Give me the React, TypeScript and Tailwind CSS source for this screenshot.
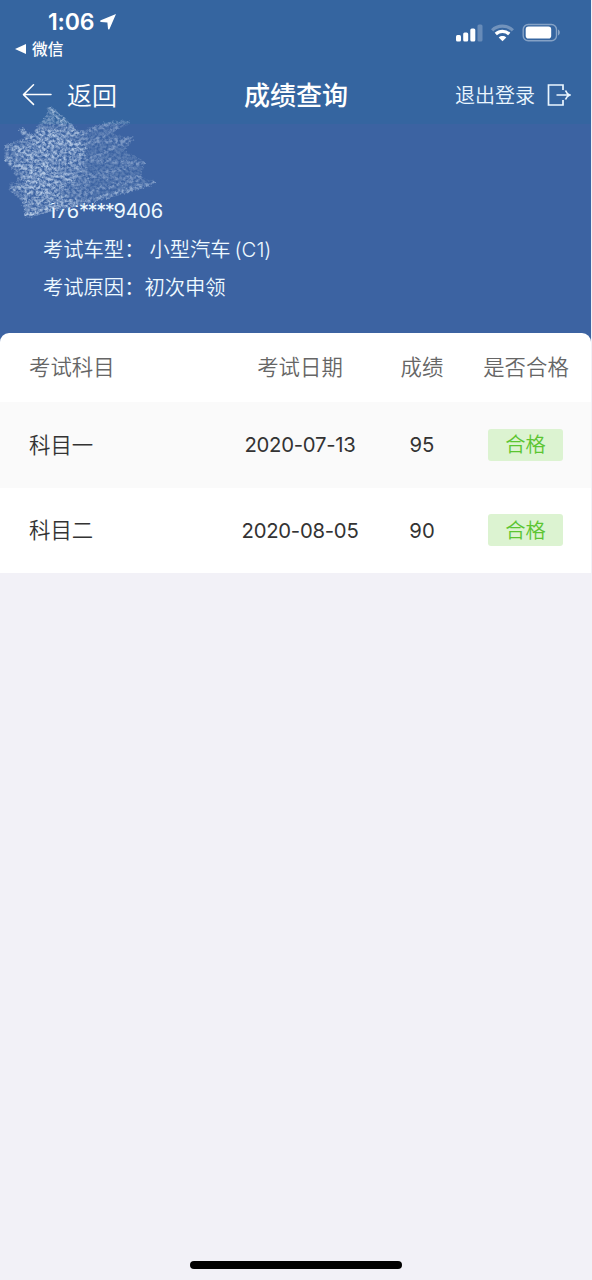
import React from "react";

type Result = { subject: string; date: string; score: number; status: string };

const results: Result[] = [
  { subject: "科目一", date: "2020-07-13", score: 95, status: "合格" },
  { subject: "科目二", date: "2020-08-05", score: 90, status: "合格" },
];

function StatusBar() {
  return (
    <div className="flex h-[66px] justify-between">
      <div className="pl-[15px] pt-[9px]">
        <div className="flex h-[27px] items-center pl-[33px] text-[23px] font-semibold leading-[27px]">
          <span className="w-[47px] tracking-[-0.2px]">1:06</span>
          <svg className="mb-[2px] ml-[5px]" width="17" height="17" viewBox="0 0 17 17" fill="currentColor">
            <path d="M16 1 .8 7.3c-.9.4-.8 1.5.2 1.6l6.4.7.6 6.2c.1 1 1.1 1.1 1.5.2Z" />
          </svg>
        </div>
        <div className="flex h-[27px] items-center gap-[6px] text-[15.7px] font-medium">
          <svg className="mb-px" width="11" height="10" viewBox="0 0 11 10" fill="currentColor">
            <path d="M0 5 11 0v10Z" />
          </svg>
          <span>微信</span>
        </div>
      </div>
      <div className="mt-[23px] flex h-[20px] items-center pr-[30px]">
        <svg width="27" height="18" viewBox="0 0 27 18" fill="currentColor">
          <rect x="0" y="11" width="5" height="6.5" rx="1.5" />
          <rect x="7.2" y="8.5" width="5" height="9" rx="1.5" />
          <rect x="14.3" y="4.5" width="5" height="13" rx="1.5" />
          <rect x="21.5" y="0.5" width="5" height="17" rx="1.5" opacity=".25" />
        </svg>
        <svg className="ml-[8px]" width="23" height="18" viewBox="0 0 24 18" fill="none" stroke="currentColor" strokeWidth="3.4">
          <path d="M1.2 6.2C7 .5 17 .5 22.8 6.2" opacity=".3" />
          <path d="M5 10.1c4-3.8 10-3.8 14 0" />
          <path d="M8.1 13.6c2.2-2 5.6-2 7.8 0L12 17.6Z" fill="currentColor" stroke="none" />
        </svg>
        <svg className="ml-[8px]" width="39" height="20" viewBox="0 0 39 20">
          <rect x="1.2" y="1.5" width="33.3" height="16.2" rx="5" fill="none" stroke="currentColor" strokeWidth="1.4" opacity=".4" />
          <rect x="3.7" y="3.6" width="25.5" height="12" rx="2.8" fill="currentColor" />
          <path d="M36 6.6v6c2.5-1 2.5-5 0-6Z" fill="currentColor" opacity=".4" />
        </svg>
      </div>
    </div>
  );
}

function NavBar() {
  return (
    <div className="grid h-[58px] grid-cols-[1fr_auto_1fr] items-center pl-[22px] pr-[21px]">
      <div className="flex items-center gap-[14px] text-[25px] font-[350]">
        <svg width="31" height="22" viewBox="0 0 31 22" fill="none" stroke="currentColor" strokeWidth="1.5" strokeLinecap="round" strokeLinejoin="round">
          <path d="M29 10.6H2M11.5.8 1.5 10.6l10 9.8" />
        </svg>
        <span className="pt-[3px]">返回</span>
      </div>
      <h1 className="text-[26px] font-medium">成绩查询</h1>
      <div className="-mr-px flex items-center justify-end gap-[12px] pt-px text-[20px] font-[350] text-[#eaf6ff]">
        <span>退出登录</span>
        <svg className="mb-[2px]" width="24" height="22" viewBox="0 0 24 22" fill="none" stroke="currentColor" strokeWidth="1.7">
          <path d="M16 6V1H1.5v20H16v-5M9.5 11H22.5M18.5 6.5c.8 2.2 2 3.6 4.2 4.5-2.2.9-3.4 2.3-4.2 4.5" />
        </svg>
      </div>
    </div>
  );
}

function ChalkScribble() {
  return (
    <svg className="absolute left-0 top-[-24px]" width="180" height="125" viewBox="0 0 180 125">
      <defs>
        <filter id="chalk" x="0" y="0" width="180" height="125" filterUnits="userSpaceOnUse" colorInterpolationFilters="sRGB">
          <feTurbulence type="fractalNoise" baseFrequency="0.33 0.37" numOctaves="4" seed="21" result="noise" />
          <feColorMatrix in="noise" type="matrix" values="0 0 0 0 1  0 0 0 0 1  0 0 0 0 1  0 2.4 0 0 -0.68" result="grain" />
          <feDisplacementMap in="SourceGraphic" in2="noise" scale="5" xChannelSelector="R" yChannelSelector="B" result="rough" />
          <feComposite in="rough" in2="grain" operator="in" result="chalked" />
          <feGaussianBlur in="chalked" stdDeviation="0.6" />
        </filter>
      </defs>
      <path d="M44 106 84 98l10 2-30 9Z" fill="#3c63a2" />
      <g filter="url(#chalk)" fill="#d9e8f8" stroke="#d9e8f8" strokeLinejoin="round" strokeLinecap="round">
        <path d="M50 6 64 18 79 32 90 37 84 58 91 76 84 100 60 107 25 117 23 103 10 91 9 84 18 83 14 73 4 60 5 45 14 42 24 39 21 28 35 36 34 30 47 15Z" opacity=".38" stroke="none" />
        <path d="M38 30 78 40 86 60 74 84 50 98 26 88 14 54Z" opacity=".2" stroke="none" />
        <path d="M79 33 105 23 129 21 112 34 133 38 125 51 144 61 141 77 154 81 137 90 84 101 91 76 84 58 90 37Z" opacity=".22" stroke="none" />
        <g fill="none" strokeWidth="6" opacity=".38">
          <path d="M22 31 56 58 8 46 72 80 7 60 60 86 24 78 45 90 14 88 66 98 24 102 75 101 27 115" />
          <path d="M50 9 78 34 38 32 84 48 40 42 66 62" />
        </g>
        <g fill="none" strokeWidth="4" opacity=".28">
          <path d="M34 88 50 64 30 68 26 112 40 104 44 88" />
          <path d="M38 34 60 36 84 55 64 48 80 72" />
        </g>
        <g fill="none" strokeWidth="4" opacity=".24">
          <path d="M80 34 108 24 128 22 88 43 132 39 88 60 143 63 88 77 140 78 86 93" />
        </g>
        <path d="M153 83 90 101 27 115" fill="none" strokeWidth="4.5" opacity=".42" />
      </g>
    </svg>
  );
}

function CandidateInfo() {
  return (
    <section className="relative h-[209px] bg-[#3c63a2] pl-[43px] pt-[67px] text-[20.3px] font-[350] leading-[38.6px] text-[#eef9ff]">
      <p className="pl-[5px] pt-px text-[20px] font-normal leading-[38.6px] tracking-[-0.2px]">176<span className="tracking-[-1.4px]">****</span>9406</p>
      <p className="whitespace-pre">考试车型：<span className="ml-[5px]">小型汽车</span><span className="ml-[4px]">(C1)</span></p>
      <p>考试原因：初次申领</p>
      <ChalkScribble />
    </section>
  );
}

function ResultTable() {
  return (
    <section className="overflow-hidden rounded-t-[9px] bg-white text-[21.4px] text-[#333]">
      <div className="grid h-[69px] grid-cols-[220px_160px_84px_1fr] items-center text-center font-[350] text-[#666]">
        <span className="pl-[29px] text-left">考试科目</span>
        <span>考试日期</span>
        <span>成绩</span>
        <span className="pr-[3px]">是否合格</span>
      </div>
      {results.map((result) => (
        <div key={result.subject} className="grid h-[85.5px] grid-cols-[220px_160px_84px_1fr] items-center text-center font-[350] odd:bg-white even:bg-[#fafafa]">
          <span className="pl-[29px] text-left">{result.subject}</span>
          <span className="pt-px text-[20.3px] font-normal tracking-[-0.25px]">{result.date}</span>
          <span className="pt-px text-[20.3px] font-normal">{result.score}</span>
          <span className="ml-[24px] flex h-[32px] w-[75px] items-center justify-center rounded-[3px] bg-[#dcf3d1] pt-px text-[20.3px] text-[#5bc531]">{result.status}</span>
        </div>
      ))}
    </section>
  );
}

export default function App() {
  return (
    <main className="flex h-[1280px] w-[592px] flex-col bg-[#f2f1f7] font-['Inter','Noto_Sans_CJK_SC',sans-serif]">
      <div className="mr-px bg-[#3c63a2] text-white">
        <header className="bg-[#3565a0]">
          <StatusBar />
          <NavBar />
        </header>
        <CandidateInfo />
        <ResultTable />
      </div>
      <div className="mx-auto mt-auto mb-[11px] h-[8px] w-[212px] rounded-full bg-black" />
    </main>
  );
}
